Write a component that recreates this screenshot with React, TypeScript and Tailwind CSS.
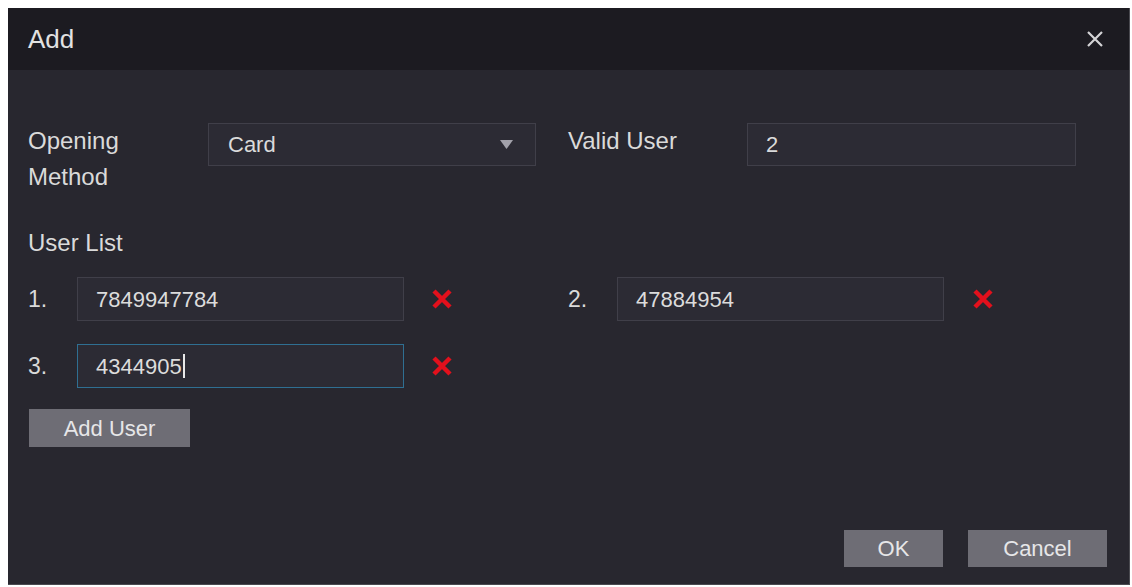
import React from "react";

const RedX = () => (
  <svg width="22" height="22" viewBox="0 0 22 22" className="shrink-0">
    <path d="M3 3 L19 19 M19 3 L3 19" stroke="#e3101c" strokeWidth="4.5" strokeLinecap="butt" />
  </svg>
);

const Field = ({ value, focused, caret, w }: { value: string; focused?: boolean; caret?: boolean; w: string }) => (
  <div
    className={`${w} h-[44px] flex items-center pl-[18px] bg-[#2c2b34] border ${focused ? "border-[#2f6f92]" : "border-[#403f49]"} text-[22px] text-[#dcdcdc]`}
  >
    <span>{value}</span>
    {caret && <span className="inline-block w-[2px] h-[24px] bg-[#e8e8e8] ml-[1px]" />}
  </div>
);

export default function App() {
  const font = { fontFamily: '"Liberation Sans", Arial, sans-serif' };
  return (
    <div className="w-[1132px] h-[587px] bg-white pt-[8px] pl-[8px]" style={font}>
      <div className="w-[1122px] h-[577px] bg-[#28272f] flex flex-col border-r border-b border-[#4a4a50]">
        {/* header */}
        <div className="h-[62px] bg-[#1c1b21] flex items-center justify-between pl-[20px] pr-[25px] shrink-0">
          <span className="text-[26px] text-[#e2e2e2]">Add</span>
          <svg width="18" height="18" viewBox="0 0 18 18">
            <path d="M2 2 L16 16 M16 2 L2 16" stroke="#d4d4d6" strokeWidth="2.2" />
          </svg>
        </div>

        {/* body */}
        <div className="flex-1 flex flex-col pl-[20px] pt-[53px] pb-[17px] pr-[22px] text-[#dadada]">
          <div className="flex items-start">
            <div className="w-[180px] text-[24px] leading-[36px]">
              Opening
              <br />
              Method
            </div>
            <div className="w-[328px] h-[43px] flex items-center justify-between pl-[19px] pr-[22px] bg-[#2c2b34] border border-[#403f49] text-[22px]">
              <span>Card</span>
              <svg width="13" height="9" viewBox="0 0 13 9">
                <path d="M0 0 H13 L6.5 9 Z" fill="#a2a1aa" />
              </svg>
            </div>
            <div className="ml-[32px] w-[179px] text-[24px] leading-[36px]">Valid User</div>
            <div className="w-[329px] h-[43px] flex items-center pl-[18px] bg-[#2c2b34] border border-[#403f49] text-[22px]">
              2
            </div>
          </div>

          <div className="mt-[30px] text-[24px] leading-[36px]">User List</div>

          <div className="mt-[16px] grid grid-cols-[540px_540px] gap-y-[23px]">
            <div className="flex items-center">
              <span className="w-[49px] text-[23px]">1.</span>
              <Field w="w-[327px]" value="7849947784" />
              <span className="ml-[27px]"><RedX /></span>
            </div>
            <div className="flex items-center">
              <span className="w-[49px] text-[23px]">2.</span>
              <Field w="w-[327px]" value="47884954" />
              <span className="ml-[28px]"><RedX /></span>
            </div>
            <div className="flex items-center">
              <span className="w-[49px] text-[23px]">3.</span>
              <Field w="w-[327px]" value="4344905" focused caret />
              <span className="ml-[27px]"><RedX /></span>
            </div>
          </div>

          <div className="mt-[21px] ml-[1px]">
            <button className="w-[161px] h-[38px] bg-[#6e6d75] text-[22px] text-[#e6e6e8]">Add User</button>
          </div>

          <div className="mt-auto flex justify-end gap-[25px]">
            <button className="w-[99px] h-[37px] bg-[#6e6d75] text-[22px] text-[#e6e6e8]">OK</button>
            <button className="w-[139px] h-[37px] bg-[#6e6d75] text-[22px] text-[#e6e6e8]">Cancel</button>
          </div>
        </div>
      </div>
    </div>
  );
}
